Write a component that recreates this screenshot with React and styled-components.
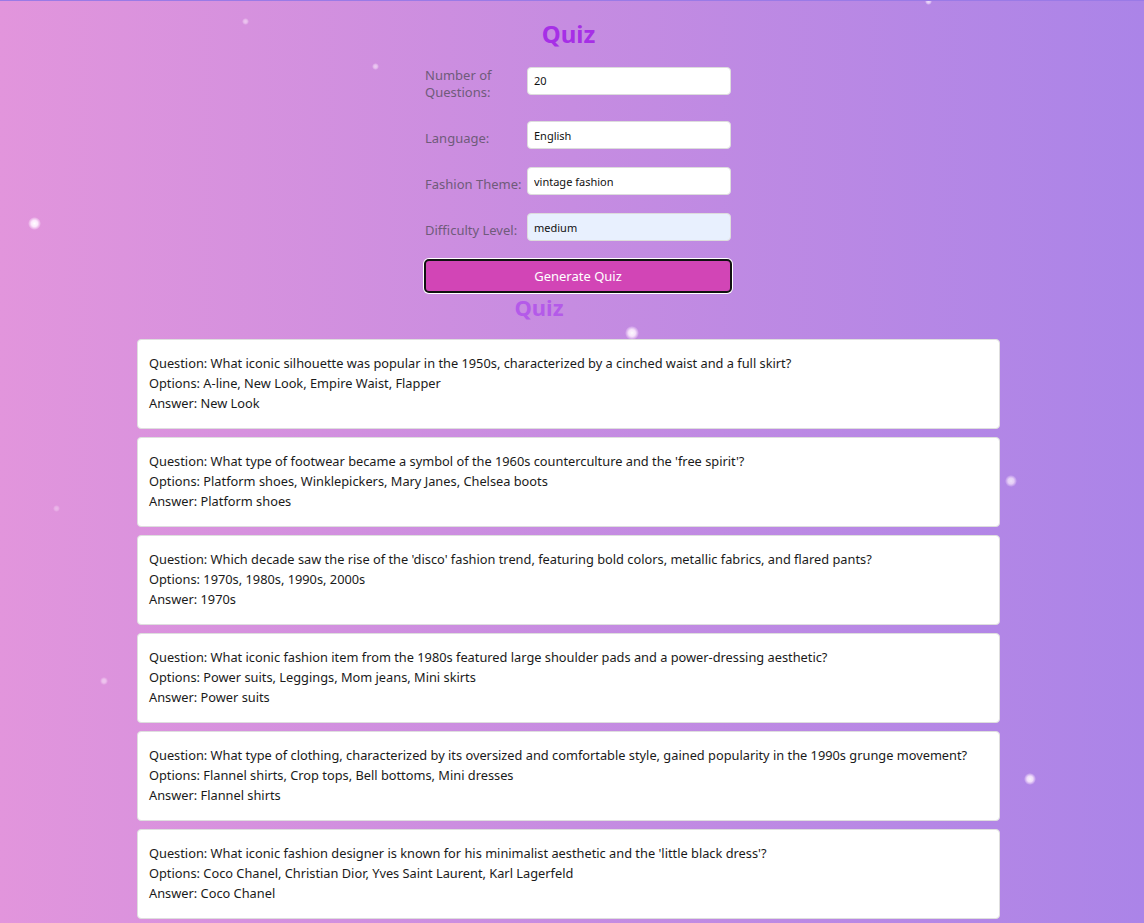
import React from "react"
import styled, { createGlobalStyle } from "styled-components"

const GlobalStyle = createGlobalStyle`
  html, body {
    margin: 0;
    padding: 0;
  }
  body {
    font-family: "Noto Sans", "Open Sans", sans-serif;
    background: linear-gradient(90deg, #e295dc 0%, #c68ce1 50%, #ab84e8 100%);
    min-height: 100vh;
  }
`

const questions = [
  {
    q: "What iconic silhouette was popular in the 1950s, characterized by a cinched waist and a full skirt?",
    o: "A-line, New Look, Empire Waist, Flapper",
    a: "New Look",
  },
  {
    q: "What type of footwear became a symbol of the 1960s counterculture and the 'free spirit'?",
    o: "Platform shoes, Winklepickers, Mary Janes, Chelsea boots",
    a: "Platform shoes",
  },
  {
    q: "Which decade saw the rise of the 'disco' fashion trend, featuring bold colors, metallic fabrics, and flared pants?",
    o: "1970s, 1980s, 1990s, 2000s",
    a: "1970s",
  },
  {
    q: "What iconic fashion item from the 1980s featured large shoulder pads and a power-dressing aesthetic?",
    o: "Power suits, Leggings, Mom jeans, Mini skirts",
    a: "Power suits",
  },
  {
    q: "What type of clothing, characterized by its oversized and comfortable style, gained popularity in the 1990s grunge movement?",
    o: "Flannel shirts, Crop tops, Bell bottoms, Mini dresses",
    a: "Flannel shirts",
  },
  {
    q: "What iconic fashion designer is known for his minimalist aesthetic and the 'little black dress'?",
    o: "Coco Chanel, Christian Dior, Yves Saint Laurent, Karl Lagerfeld",
    a: "Coco Chanel",
  },
]

const sparkles = [
  { x: 245, y: 20, s: 7, o: 0.5 },
  { x: 375, y: 65, s: 7, o: 0.55 },
  { x: 34, y: 222, s: 13, o: 1 },
  { x: 632, y: 332, s: 14, o: 0.95 },
  { x: 56, y: 507, s: 7, o: 0.35 },
  { x: 104, y: 680, s: 8, o: 0.5 },
  { x: 1011, y: 480, s: 12, o: 0.75 },
  { x: 1030, y: 778, s: 12, o: 0.9 },
  { x: 928, y: 0, s: 7, o: 0.7 },
]

const App = () => {
  return (
    <Page>
      <GlobalStyle />
      {sparkles.map((sp, i) => (
        <Sparkle
          key={i}
          style={{ left: sp.x - sp.s / 2, top: sp.y - sp.s / 2, width: sp.s, height: sp.s, opacity: sp.o }}
        />
      ))}
      <Title>Quiz</Title>
      <Form>
        <Row $tall>
          <Label>Number of Questions:</Label>
          <Input defaultValue="20" />
        </Row>
        <Row>
          <Label>Language:</Label>
          <Input defaultValue="English" />
        </Row>
        <Row>
          <Label>Fashion Theme:</Label>
          <Input defaultValue="vintage fashion" />
        </Row>
        <Row>
          <Label>Difficulty Level:</Label>
          <Input defaultValue="medium" $filled />
        </Row>
        <Button>Generate Quiz</Button>
      </Form>
      <SubTitle>Quiz</SubTitle>
      <List>
        {questions.map((item, i) => (
          <Card key={i}>
            <Line>Question: {item.q}</Line>
            <Line>Options: {item.o}</Line>
            <Line>Answer: {item.a}</Line>
          </Card>
        ))}
      </List>
    </Page>
  )
}

export default App

const Page = styled.div`
  position: relative;
  min-height: 923px;
  border-top: 1px solid #9a7ae6;
  overflow: hidden;
`

const Sparkle = styled.span`
  position: absolute;
  border-radius: 50%;
  background: radial-gradient(circle, #ffffff 0%, rgba(255, 240, 255, 0.9) 35%, rgba(255, 255, 255, 0) 72%);
  filter: blur(0.5px);
  pointer-events: none;
`

const Title = styled.h1`
  margin: 18px 0 0;
  padding-right: 7px;
  text-align: center;
  font-size: 24px;
  line-height: 30px;
  font-weight: 700;
  color: #a62fe6;
`

const Form = styled.div`
  width: 308px;
  margin: 11px 0 0 calc(50% - 148px);
  display: flex;
  flex-direction: column;
`

const Row = styled.div`
  display: flex;
  align-items: center;
  margin-bottom: ${(p) => (p.$tall ? "20px" : "18px")};
  padding-left: 1px;
`

const Label = styled.label`
  width: 102px;
  padding-top: 7px;
  font-size: 13px;
  line-height: 17px;
  color: #6f5b7a;
`

const Input = styled.input`
  width: 204px;
  height: 28px;
  box-sizing: border-box;
  border: 1px solid #dcdcdc;
  border-radius: 4px;
  padding: 0 6px;
  font-family: "Noto Sans", sans-serif;
  font-size: 11px;
  color: #111;
  background: ${(p) => (p.$filled ? "#e8f0fe" : "#ffffff")};
  outline: none;
`

const Button = styled.button`
  width: 308px;
  height: 34px;
  box-sizing: border-box;
  background: #d245b6;
  border: 2px solid #111;
  border-radius: 5px;
  box-shadow: 0 0 0 1px #ffffff;
  color: #fff;
  font-family: "Noto Sans", sans-serif;
  font-size: 13px;
  cursor: pointer;
`

const SubTitle = styled.h2`
  margin: 0;
  padding-right: 66px;
  text-align: center;
  font-size: 22px;
  line-height: 28px;
  font-weight: 700;
  color: #b45ae9;
`

const List = styled.div`
  width: 863px;
  margin: 18px 0 0 calc(50% - 435px);
  display: flex;
  flex-direction: column;
  gap: 8px;
`

const Card = styled.div`
  box-sizing: border-box;
  height: 90px;
  background: #fff;
  border: 1px solid #dedede;
  border-radius: 4px;
  padding: 13px 11px 0;
`

const Line = styled.p`
  margin: 0;
  font-size: 12.8px;
  line-height: 20px;
  color: #1a1a1a;
`
